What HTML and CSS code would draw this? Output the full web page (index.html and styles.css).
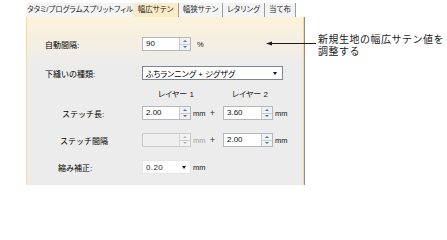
FILE: index.html
```html
<!DOCTYPE html>
<html lang="ja">
<head>
<meta charset="utf-8">
<link rel="stylesheet" href="styles.css">
</head>
<body>
<div class="page">
  <div class="dialog">
    <div class="tabs">
      <div class="tab t1">タタミ/プログラムスプリットフィル</div>
      <div class="tab t2 active">幅広サテン</div>
      <div class="tab t3">幅狭サテン</div>
      <div class="tab t4">レタリング</div>
      <div class="tab t5">当て布</div>
    </div>
    <div class="panel">
      <div class="row r1">
        <span class="label l-auto">自動間隔:</span>
        <div class="spin"><span class="val">90</span><span class="spinbtn"><i class="up"></i><i class="dn"></i></span></div>
        <span class="unit pct">%</span>
      </div>
      <div class="row r2">
        <span class="label l-type">下縫いの種類:</span>
        <div class="select"><span class="sel-text">ふちランニング + ジグザグ</span><span class="caret"></span></div>
      </div>
      <div class="row rh">
        <span class="layer lay1">レイヤー 1</span>
        <span class="layer lay2">レイヤー 2</span>
      </div>
      <div class="row r4">
        <span class="label l-len">ステッチ長:</span>
        <div class="spin"><span class="val">2.00</span><span class="spinbtn"><i class="up"></i><i class="dn"></i></span></div>
        <span class="unit mm">mm</span>
        <span class="plus">+</span>
        <div class="spin spin2"><span class="val">3.60</span><span class="spinbtn"><i class="up"></i><i class="dn"></i></span></div>
        <span class="unit mm">mm</span>
      </div>
      <div class="row r5">
        <span class="label l-gap">ステッチ間隔</span>
        <div class="spin disabled"><span class="val"></span><span class="spinbtn"><i class="up"></i><i class="dn"></i></span></div>
        <span class="unit mm dim">mm</span>
        <span class="plus">+</span>
        <div class="spin spin2"><span class="val">2.00</span><span class="spinbtn"><i class="up"></i><i class="dn"></i></span></div>
        <span class="unit mm">mm</span>
      </div>
      <div class="row r6">
        <span class="label l-shrink">縮み補正:</span>
        <div class="combo"><span class="combo-val">0.20</span><span class="caret"></span></div>
        <span class="unit mm">mm</span>
      </div>
    </div>
  </div>
  <div class="callout">
    <svg class="arrow" width="50" height="16" viewBox="0 0 50 16">
      <line x1="4" y1="8.5" x2="50" y2="8.5" stroke="#1a1a1a" stroke-width="1"/>
      <polygon points="0,8.5 6,6.5 6,10.5" fill="#1a1a1a"/>
    </svg>
    <div class="callout-text">
      <div class="cl">新規生地の幅広サテン値を</div>
      <div class="cl">調整する</div>
    </div>
  </div>
</div>
</body>
</html>
```
FILE: styles.css
```css
body {
  margin: 0;
  background: #ffffff;
  font-family: "Liberation Sans", "Noto Sans CJK JP", sans-serif;
  color: #1e1e1e;
}

.page {
  position: relative;
  width: 447px;
  height: 203px;
  padding-top: 3px;
  box-sizing: border-box;
}

.dialog {
  margin-left: 26px;
  width: 278px;
}

.tabs {
  display: flex;
  height: 14px;
  padding-left: 1px;
  font-size: 7.5px;
  line-height: 14px;
  font-feature-settings: "palt";
  color: #2a2a2a;
}

.tab {
  background: #f4f4f4;
  text-align: center;
  white-space: nowrap;
  box-sizing: border-box;
  border-right: 1px solid #9c9c9c;
  overflow: hidden;
}

.t1 { width: 106px; border-right: none; }
.t2 { width: 46px; }
.t3 { width: 44px; }
.t4 { width: 42px; }
.t5 { width: 31px; }

.tab.active {
  background: #fcecc6;
  color: #1a1a1a;
}

.panel {
  height: 168px;
  box-sizing: border-box;
  padding-top: 20px;
  border-left: 1px solid #f1d9a1;
  border-right: 1px solid #f1d9a1;
  box-shadow: 1px 0 0 #8c8c8c;
  background: linear-gradient(to bottom, #fdf3da 0px, #f5efe3 24px, #ececec 50px, #ececec 100%);
}

.row {
  display: flex;
  align-items: center;
  height: 14px;
}

.r2 { margin-top: 15px; }
.rh { margin-top: 7px; height: 12px; }
.r4 { margin-top: 7px; }
.r5 { margin-top: 13px; }
.r6 { margin-top: 13px; }

.label {
  flex: none;
  width: 115px;
  box-sizing: border-box;
  font-size: 8px;
  white-space: nowrap;
  color: #000;
}

.l-auto { padding-left: 18px; }
.l-type { padding-left: 18px; }
.l-len { padding-left: 35px; }
.l-gap { padding-left: 33px; }
.l-shrink { padding-left: 31px; }

.spin {
  flex: none;
  display: flex;
  width: 49px;
  height: 14px;
  box-sizing: border-box;
  border: 1px solid #b4b7bd;
  background: #ffffff;
}

.spin2 {
  width: 50px;
  margin-left: 3px;
}

.val {
  flex: 1;
  font-size: 8px;
  line-height: 12px;
  padding-left: 3px;
  color: #111;
}

.spinbtn {
  width: 10px;
  display: flex;
  flex-direction: column;
  border-left: 1px solid #c8ccd2;
  background: #eef1f5;
}

.spinbtn i {
  flex: 1;
  display: flex;
  align-items: center;
  justify-content: center;
}

.spinbtn .up {
  border-bottom: 1px solid #c8ccd2;
}

.spinbtn .up::before {
  content: "";
  border-left: 2px solid transparent;
  border-right: 2px solid transparent;
  border-bottom: 2px solid #5d7190;
}

.spinbtn .dn::before {
  content: "";
  border-left: 2px solid transparent;
  border-right: 2px solid transparent;
  border-top: 2px solid #5d7190;
}

.spin.disabled {
  background: #efefef;
  border-color: #cacaca;
}

.spin.disabled .spinbtn {
  background: #f2f2f2;
  border-left-color: #d4d4d4;
}

.spin.disabled .spinbtn .up::before { border-bottom-color: #b5b5b5; }
.spin.disabled .spinbtn .dn::before { border-top-color: #b5b5b5; }

.unit {
  flex: none;
  font-size: 7.5px;
  color: #111;
}

.pct { margin-left: 6px; }

.mm {
  margin-left: 2px;
  width: 12px;
}

.unit.dim { color: #a0a0a0; }

.plus {
  flex: none;
  width: 15px;
  text-align: center;
  font-size: 9px;
  color: #333;
}

.select {
  flex: none;
  display: flex;
  align-items: center;
  width: 141px;
  height: 14px;
  box-sizing: border-box;
  border: 1px solid #80868f;
  background: #ffffff;
  padding-left: 3px;
}

.sel-text {
  font-size: 8px;
  white-space: nowrap;
  font-feature-settings: "palt";
  color: #000;
}

.caret {
  margin-left: auto;
  margin-right: 5px;
  border-left: 2.5px solid transparent;
  border-right: 2.5px solid transparent;
  border-top: 3px solid #111;
}

.combo {
  flex: none;
  display: flex;
  align-items: center;
  width: 49px;
  height: 14px;
  box-sizing: border-box;
  border: 1px solid #e6e6e6;
  background: #ffffff;
  padding-left: 3px;
}

.combo .caret {
  margin-right: 4px;
}

.combo-val {
  font-size: 8px;
  letter-spacing: 0.4px;
  color: #2a2a3a;
}

.layer {
  font-size: 8px;
  white-space: nowrap;
  font-feature-settings: "palt";
  color: #222;
}

.lay1 { margin-left: 131px; }
.lay2 { margin-left: 38px; }

.callout {
  position: absolute;
  left: 266px;
  top: 35px;
  display: flex;
  align-items: flex-start;
}

.arrow {
  display: block;
  flex: none;
}

.callout-text {
  margin-left: 2px;
  margin-top: -1px;
  font-size: 10px;
  letter-spacing: 0.5px;
  white-space: nowrap;
  color: #1a1a1a;
  font-family: "Liberation Sans", "Noto Sans CJK JP", sans-serif;
}

.cl {
  height: 11.5px;
  line-height: 11.5px;
}
```
